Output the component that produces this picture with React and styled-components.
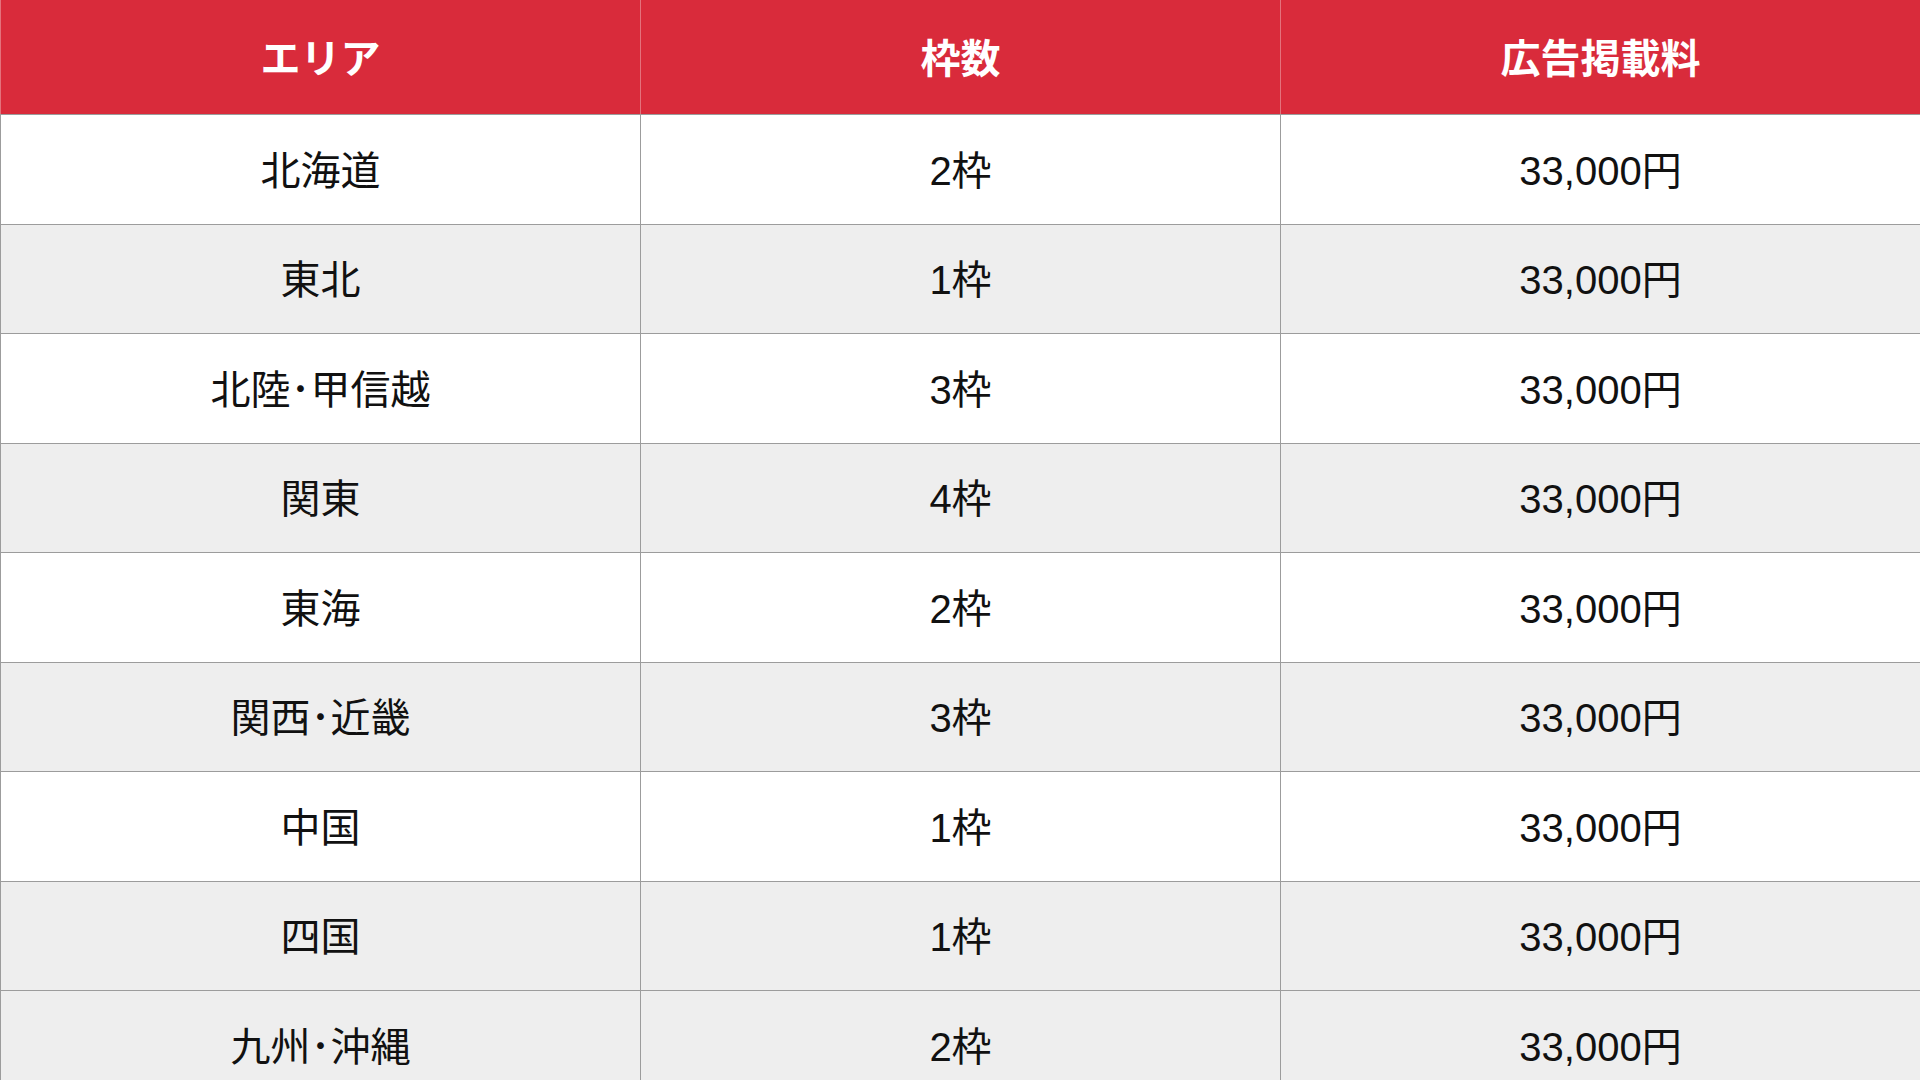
import React from 'react';
import styled, { createGlobalStyle } from 'styled-components';

const GlobalStyle = createGlobalStyle`
  html, body {
    margin: 0;
    padding: 0;
    background: #ffffff;
    overflow: hidden;
  }
`;

const rows = [
  { area: '北海道', slots: '2枠', price: '33,000円' },
  { area: '東北', slots: '1枠', price: '33,000円' },
  { area: '北陸･甲信越', slots: '3枠', price: '33,000円' },
  { area: '関東', slots: '4枠', price: '33,000円' },
  { area: '東海', slots: '2枠', price: '33,000円' },
  { area: '関西･近畿', slots: '3枠', price: '33,000円' },
  { area: '中国', slots: '1枠', price: '33,000円' },
  { area: '四国', slots: '1枠', price: '33,000円' },
  { area: '九州･沖縄', slots: '2枠', price: '33,000円', shaded: true }
];

const Table = styled.div`
  width: 1920px;
  height: 1080px;
  overflow: hidden;
  display: flex;
  flex-direction: column;
  font-family: 'Liberation Sans', 'Noto Sans CJK JP', sans-serif;
`;

const Row = styled.div`
  display: grid;
  grid-template-columns: repeat(3, 640px);
  flex: 0 0 auto;
  height: ${({ head }) => (head ? '115px' : '109.5px')};
  box-sizing: border-box;
  border-bottom: 1px solid #9c9c9c;
  background-color: ${({ head, shaded }) => (head ? '#d92b3b' : shaded ? '#eeeeee' : '#ffffff')};
`;

const Cell = styled.div`
  display: flex;
  align-items: center;
  justify-content: center;
  box-sizing: border-box;
  border-left: 1px solid ${({ head }) => (head ? '#e4727c' : '#9c9c9c')};
  font-size: 40px;
  font-weight: ${({ head }) => (head ? 700 : 400)};
  color: ${({ head }) => (head ? '#ffffff' : '#111111')};
  padding-bottom: 3px;
`;

export default function App() {
  return (
    <>
      <GlobalStyle />
      <Table>
        <Row head>
          <Cell head>エリア</Cell>
          <Cell head>枠数</Cell>
          <Cell head>広告掲載料</Cell>
        </Row>
        {rows.map((r, i) => (
          <Row key={r.area} shaded={r.shaded || i % 2 === 1}>
            <Cell>{r.area}</Cell>
            <Cell>{r.slots}</Cell>
            <Cell>{r.price}</Cell>
          </Row>
        ))}
      </Table>
    </>
  );
}
